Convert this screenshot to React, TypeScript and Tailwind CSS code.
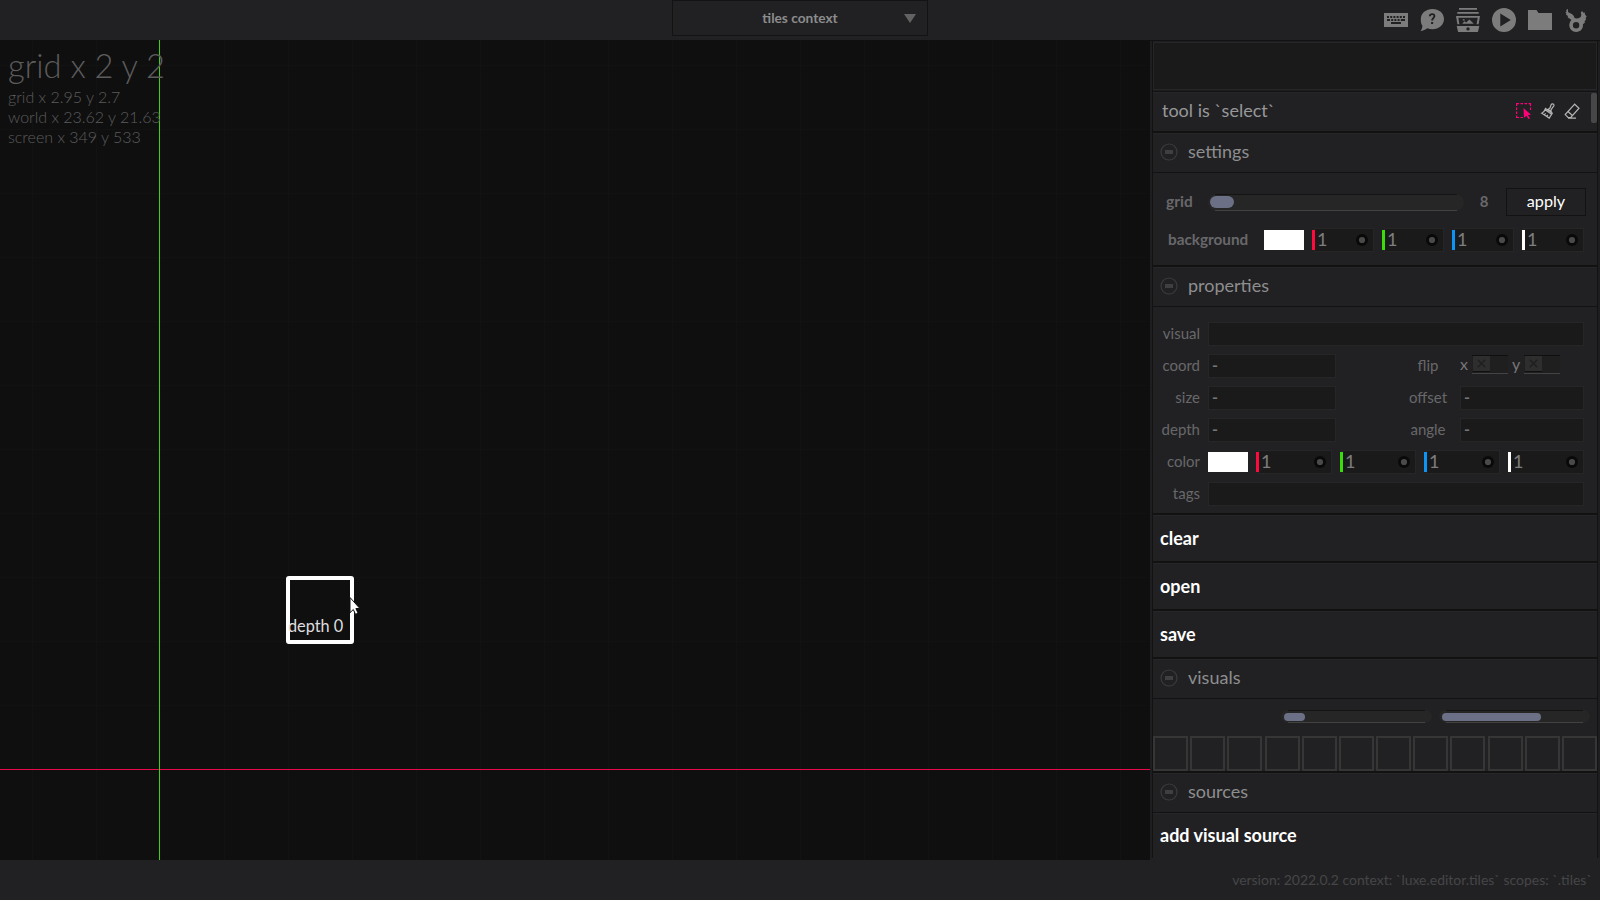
import type { ReactNode } from "react";

const channelColors = ["bg-[#ff0a3c]", "bg-[#3bdc0c]", "bg-[#0b95f5]", "bg-white"];

function TopIcons() {
  return (
    <div className="flex items-center gap-3 text-[#7c7c7d]">
      <svg width="24" height="24" viewBox="0 0 24 24" fill="currentColor">
        <path
          fillRule="evenodd"
          d="M0 5h24v14H0zM3 8v2h2V8zm3.200 0v2h2V8zm3.200 0v2h2V8zm3.200 0v2h2V8zm3.200 0v2h2V8zm3.200 0v2h2V8zM3 11v2h3v-2zm4.200 0v2h2v-2zm3.200 0v2h2v-2zm3.200 0v2h2v-2zm3.200 0v2H21v-2zM7 14v2h10v-2z"
        />
      </svg>
      <svg width="24" height="24" viewBox="0 0 24 24">
        <path fill="currentColor" d="M12.500 1C19 1 24 5.300 24 11s-5 10.200-11.500 10.200c-1.900 0-3.600-.3-5.200-1C5.500 21.600 3 22.800.5 23c1.100-1.300 1.800-3 1.900-5.200C1 16 .8 13.500.8 11 .8 5.300 6 1 12.500 1z" />
        <path fill="none" stroke="#212123" strokeWidth="1.900" d="M9.800 8.300c.2-2.900 4.600-2.900 4.600-.2 0 2-2.300 2-2.300 4.500" />
        <rect x="11.100" y="14" width="2" height="2" fill="#212123" />
      </svg>
      <svg width="24" height="24" viewBox="0 0 24 24" fill="currentColor">
        <path d="M3 0h18v1.700H3zM1.300 4h21.400v1.800H1.300z" />
        <path fillRule="evenodd" d="M0 8h24l-1.400 8.300h-2L21.700 9.800H2.300l1.100 6.500h-2z" />
        <path d="M6.200 15.800l2.200-2.600 1.800 1.300 3.200-3 4.400 4.300zM6.800 11.200h1.800v1.400H6.800z" />
        <path fillRule="evenodd" d="M.7 18h22.600l-1.400 6H2.100zM12 19.200a1.700 1.700 0 100 3.400 1.700 1.700 0 000-3.400z" />
      </svg>
      <svg width="24" height="24" viewBox="0 0 24 24" fill="currentColor">
        <path fillRule="evenodd" d="M12 0a12 12 0 100 24 12 12 0 000-24zM8.300 5.500L18.800 12 8.300 18.500z" />
      </svg>
      <svg width="24" height="24" viewBox="0 0 24 24" fill="currentColor">
        <path d="M0 2h8.500l2 3H24v17H0z" />
      </svg>
      <svg width="24" height="24" viewBox="0 0 24 24" fill="currentColor">
        <path
          fillRule="evenodd"
          d="M3.700.8l.5 3.400 3.600 1.900c2 1.200 2.200 2.700 2.900 4.200 2 .3 3.900.2 5.300-.7 1.200-.9 1.600-2.200.8-5l1.300-1.500 1.600 1.800 1-.6.3 2.200 1.700 1.900-1 1.400.3 2-1.300 1.200.1 1.800-1.900 1.500c.7 4.300-2.500 7.700-6.700 7.700-3.900 0-6.900-3-6.900-6.700 0-2.200 1-3.800 2-5.200-.8-1.300-2.900-1.600-3.700-3.100l.5-1L2 6.700l.4-1.200-1-1.300 1.100-.4-.3-1.700zM12.100 14a3.200 3.200 0 100 6.400 3.200 3.200 0 000-6.400z"
        />
      </svg>
    </div>
  );
}

function ToolIcons() {
  return (
    <div className="flex items-center gap-2">
      <svg width="16" height="16" viewBox="0 0 16 16">
        <path
          fill="none"
          stroke="#ff007b"
          strokeWidth="1.200"
          d="M.6 3V.6H3M4.500.6H7M8.500.6H11M12.500.6h2V3M14.500 4.500V7M.6 4.500V7M.6 8.500V11M.6 12.500v2H3M4.500 14.500H7"
        />
        <path fill="#ff007b" d="M7.500 5l7.500 6.800-3 .2 2 3.200-1.600.8-1.900-3.200-2.500 2z" />
      </svg>
      <svg width="16" height="16" viewBox="0 0 16 16" fill="none" stroke="#b4b4b5" strokeWidth="1.200">
        <path d="M8.200 6.200L10 5l1.100-3.200c.6-1.200 2.600-1.200 2.900.1.300 1-.4 1.500-1.200 2.200L11 7l.3 2.200zM4.700 6.500l6.600 4.600M5.500 5.500l6.800 4.600-3.100 5L1.700 10.200c1.600-.6 3.100-2.400 3.800-4.700zM4.300 12l1.300-1.700M6.600 13.500l1.300-1.700" />
      </svg>
      <svg width="16" height="16" viewBox="0 0 16 16" fill="none" stroke="#b4b4b5" strokeWidth="1.200">
        <path d="M10.700 1.200l4.300 4-8.200 9.300H4L1.200 11.600zM4 8.500l4.700 4.200M4 15.200h8" />
      </svg>
    </div>
  );
}

function CollapseIcon() {
  return (
    <svg width="18" height="18" viewBox="0 0 18 18">
      <circle cx="9" cy="9" r="8" fill="none" stroke="#3b3b3d" strokeWidth="1.200" />
      <rect x="5" y="7" width="8" height="4" fill="#3f3f41" />
    </svg>
  );
}

function SectionHeader({ title }: { title: string }) {
  return (
    <div className="flex h-[39px] shrink-0 items-center gap-[10px] border-t border-[#262628] bg-[#212123] pb-[2px] pl-[7px] text-[18px] leading-none text-[#8e8e8f]">
      <CollapseIcon />
      <span className="pb-[2px]">{title}</span>
    </div>
  );
}

function ActionRow({ children, last = false }: { children: ReactNode; last?: boolean }) {
  return (
    <div
      className={
        last
          ? "flex h-[45px] shrink-0 items-center border-t border-[#262628] bg-[#212123] pb-px pl-[7px] text-[18px] font-bold leading-none text-white"
          : "mb-[2px] flex h-[46px] shrink-0 items-center border-t border-[#262628] bg-[#212123] pb-px pl-[7px] text-[18px] font-bold leading-none text-white"
      }
    >
      <span className="pb-px">{children}</span>
    </div>
  );
}

function Slider({ trackClass, fillClass }: { trackClass: string; fillClass: string }) {
  return (
    <div className={`relative flex items-center rounded-full bg-[#262626] ${trackClass}`}>
      <div className={`bg-[#6c7086] ${fillClass}`} />
      <div className="absolute inset-x-[7px] top-0 h-px bg-[#141415]" />
      <div className="absolute inset-x-[7px] bottom-0 h-px bg-[#424243]" />
    </div>
  );
}

function Channel({ color, className }: { color: string; className: string }) {
  return (
    <div className={`flex h-6 items-center ${className}`}>
      <div className={`z-10 h-5 w-[3px] ${color}`} />
      <div className="-ml-px flex h-6 flex-1 items-center justify-between border border-[#262627] bg-[#1a1a1a] pl-[2px] pr-[5px] text-[18px] leading-none text-[#7e7e7f]">
        <span className="pb-[2px]">1</span>
        <svg width="12" height="12" viewBox="0 0 12 12">
          <circle cx="6" cy="6" r="6" fill="#090909" />
          <circle cx="6" cy="6" r="3.100" fill="#4a4a4b" />
        </svg>
      </div>
    </div>
  );
}

function Field({ value = "", className }: { value?: string; className: string }) {
  return (
    <div className={`flex h-6 items-center border border-[#262627] bg-[#1a1a1a] pl-[3px] text-[16px] font-bold leading-none text-[#757576] ${className}`}>
      {value && <span className="pb-[2px]">{value}</span>}
    </div>
  );
}

function Label({ children }: { children: ReactNode }) {
  return <div className="w-[47px] shrink-0 pb-px text-right text-[15px] leading-none text-[#68686a]">{children}</div>;
}

function MidLabel({ children }: { children: ReactNode }) {
  return <div className="w-[60px] pb-px text-center text-[15px] leading-none text-[#68686a]">{children}</div>;
}

function Toggle() {
  return (
    <div className="flex h-[19px] w-9 items-start border-b border-t border-b-[#434344] border-t-[#0f0f10] bg-[#1f1f20] pl-px">
      <div className="flex h-[16px] w-[17px] items-center justify-center border-b border-[#101010] bg-[#2e2e2f]">
        <svg width="9" height="9" viewBox="0 0 9 9" stroke="#1f1f20" strokeWidth="1.500">
          <path d="M.8.800l7.400 7.400M8.200.800L.8 8.200" />
        </svg>
      </div>
    </div>
  );
}

function SidePanel() {
  return (
    <aside className="flex h-[818px] w-[450px] shrink-0 border-t border-[#111112] bg-[#1e1e20] pl-[2px]">
      <div className="flex w-[446px] flex-col border-x border-[#121213] bg-[#121213]">
        <div className="shrink-0 bg-[#1e1e20] py-px">
          <div className="h-12 border border-[#262628] bg-[#1a1a1a]" />
        </div>
        <div className="relative mb-[2px] mt-px flex h-[39px] shrink-0 items-center justify-between border-t border-[#262628] bg-[#212123] pb-[2px] pl-[9px] pr-[17px] text-[18px] leading-none text-[#98989a]">
          <span className="pb-[2px]">tool is `select`</span>
          <ToolIcons />
          <div className="absolute right-0 top-0 h-[30px] w-[6px] rounded-[2px] bg-[#474748]" />
        </div>

        <SectionHeader title="settings" />
        <div className="mb-[2px] mt-px h-[92px] shrink-0 bg-[#212123] pl-[13px] pr-[11px] pt-[15px]">
          <div className="flex h-7 items-center">
            <div className="w-[42px] text-[15.500px] font-bold leading-none text-[#68686a]">grid</div>
            <Slider trackClass="h-[17px] w-[256px] pl-[2px]" fillClass="h-3 w-6 rounded-full" />
            <div className="w-10 pb-px text-center text-[15px] font-bold leading-none text-[#68686a]">8</div>
            <div className="ml-[2px] flex h-7 w-20 items-center justify-center border border-[#121213] bg-[#212123] pb-[2px] text-[16.200px] leading-none text-white">
              apply
            </div>
          </div>
          <div className="mt-3 flex h-6 items-center pl-[2px]">
            <div className="w-[96px] text-[15.300px] font-bold leading-none text-[#68686a]">background</div>
            <div className="h-5 w-10 bg-white" />
            <div className="ml-2 flex gap-2">
              {channelColors.map((color) => (
                <Channel key={color} color={color} className="w-[62px]" />
              ))}
            </div>
          </div>
        </div>

        <SectionHeader title="properties" />
        <div className="mb-[2px] mt-px flex h-[206px] shrink-0 flex-col gap-2 bg-[#212123] pr-[13px] pt-[15px]">
          <div className="flex items-center gap-2">
            <Label>visual</Label>
            <Field className="flex-1" />
          </div>
          <div className="flex items-center gap-2">
            <Label>coord</Label>
            <Field value="-" className="w-32" />
            <div className="ml-[54px] flex items-center">
              <MidLabel>flip</MidLabel>
              <div className="flex items-center pb-[3px] pl-[2px] text-[16px] leading-none text-[#77777a]">
                <span className="w-3 pb-[2px]">x</span>
                <Toggle />
                <span className="w-4 pb-[2px] pl-1">y</span>
                <Toggle />
              </div>
            </div>
          </div>
          {[
            ["size", "offset"],
            ["depth", "angle"],
          ].map(([left, right]) => (
            <div key={left} className="flex items-center gap-2">
              <Label>{left}</Label>
              <Field value="-" className="w-32" />
              <div className="ml-[54px] flex items-center">
                <MidLabel>{right}</MidLabel>
                <Field value="-" className="ml-[2px] w-[124px]" />
              </div>
            </div>
          ))}
          <div className="flex items-center gap-2">
            <Label>color</Label>
            <div className="h-5 w-10 bg-white" />
            {channelColors.map((color) => (
              <Channel key={color} color={color} className="w-[76px]" />
            ))}
          </div>
          <div className="flex items-center gap-2">
            <Label>tags</Label>
            <Field className="flex-1" />
          </div>
        </div>

        <ActionRow>clear</ActionRow>
        <ActionRow>open</ActionRow>
        <ActionRow>save</ActionRow>

        <SectionHeader title="visuals" />
        <div className="mb-[2px] mt-px h-[72px] shrink-0 bg-[#212123] pt-[11px]">
          <div className="flex justify-end gap-[7px] pr-[7px]">
            <Slider trackClass="h-[13px] w-[151px] pl-[3px]" fillClass="h-2 w-[21px] rounded-full" />
            <Slider trackClass="h-[13px] w-[151px] pl-[3px]" fillClass="h-2 w-[99px] rounded-full" />
          </div>
          <div className="mt-[13px] flex justify-between">
            {Array.from({ length: 12 }, (_, i) => (
              <div key={i} className="h-[35px] w-[35px] border-2 border-[#363637]" />
            ))}
          </div>
        </div>

        <SectionHeader title="sources" />
        <div className="h-px shrink-0 bg-[#121213]" />
        <ActionRow last>add visual source</ActionRow>
      </div>
    </aside>
  );
}

function Canvas() {
  const columns = Array.from({ length: 18 }, (_, i) => 32 + i * 64);
  const rows = Array.from({ length: 12 }, (_, i) => 25 + i * 64);
  return (
    <main className="relative h-[820px] flex-1 overflow-hidden bg-[#0f0f0f]">
      <svg className="absolute left-0 top-0" width="1150" height="820">
        {columns.map((x) => (
          <rect key={`c${x}`} x={x} y="0" width="1" height="820" fill="#121212" />
        ))}
        {rows.map((y) => (
          <rect key={`r${y}`} x="0" y={y} width="1150" height="1" fill="#121212" />
        ))}
        <rect x="0" y="729" width="1150" height="1" fill="#e80a48" />
        <rect x="159" y="0" width="1" height="820" fill="#3fd011" />
      </svg>
      <div className="relative flex flex-col pl-2 pt-[9px] font-light text-[#5c5c5d]">
        <div className="text-[32.700px] leading-[34px]">grid x 2 y 2</div>
        <div className="pt-[4px] text-[16px] leading-5">
          <div>grid x 2.95 y 2.7</div>
          <div>world x 23.62 y 21.63</div>
          <div>screen x 349 y 533</div>
        </div>
      </div>
      <div className="absolute left-[286px] top-[536px] flex h-[68px] w-[68px] items-end whitespace-nowrap rounded-[3px] border-4 border-white pb-[6px] text-[16.300px] leading-none text-[#dededf]">
        <span className="-ml-[2px]">depth 0</span>
      </div>
      <svg className="absolute left-[349px] top-[557px]" width="12" height="20" viewBox="0 0 12 20">
        <path d="M1 .5v15.200l3.300-3.200 2.200 4.800 2.600-1.100-2.200-4.700h4z" fill="#fff" stroke="#101014" strokeWidth="1" />
      </svg>
    </main>
  );
}

export default function App() {
  return (
    <div className="flex h-[900px] w-[1600px] flex-col overflow-hidden bg-[#212123] font-['Lato',sans-serif]">
      <header className="grid h-10 shrink-0 grid-cols-[1fr_256px_1fr] bg-[#212123]">
        <div />
        <div className="relative flex h-9 items-center justify-center border border-[#131314] pb-px text-[13.700px] font-bold leading-none text-[#8c8c8d]">
          tiles context
          <svg className="absolute right-[11px] top-[13px]" width="12" height="9" viewBox="0 0 12 9">
            <path d="M0 0h12L6 9z" fill="#626263" />
          </svg>
        </div>
        <div className="flex items-center justify-end pr-3">
          <TopIcons />
        </div>
      </header>
      <div className="flex h-[820px] shrink-0">
        <Canvas />
        <SidePanel />
      </div>
      <footer className="-mt-[2px] flex h-[42px] items-center justify-end pr-2 pt-[2px] text-[13.960px] leading-none text-[#464648]">
        version: 2022.0.2 context: `luxe.editor.tiles` scopes: `.tiles`
      </footer>
    </div>
  );
}
